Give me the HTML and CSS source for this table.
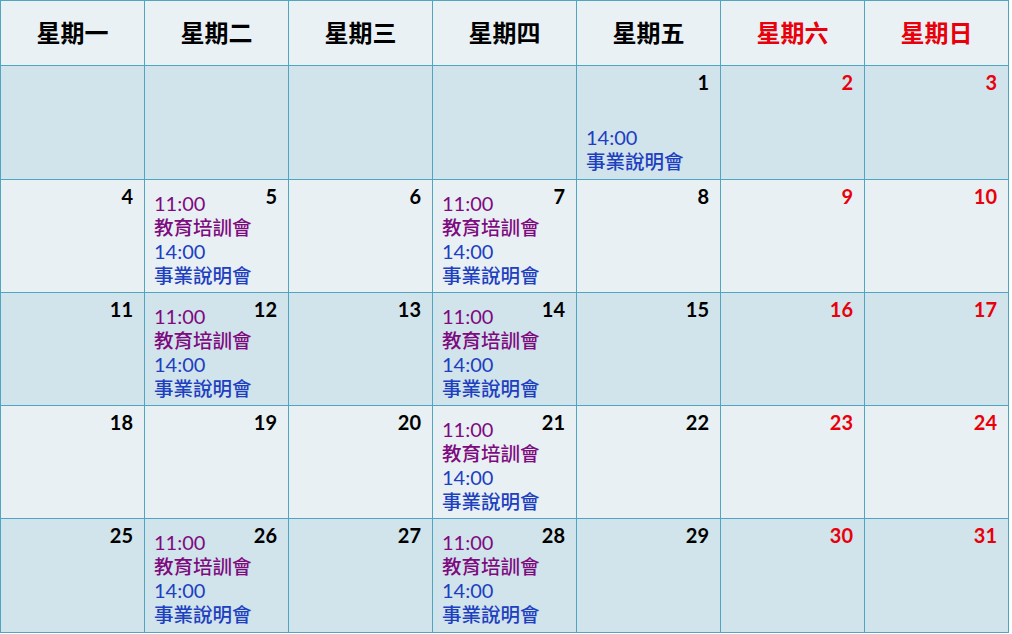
FILE: index.html
```html
<!DOCTYPE html>
<html lang="zh-Hant">
  <head>
    <meta charset="UTF-8" />
    <meta name="viewport" content="width=device-width, initial-scale=1.0" />
    <title>行事曆</title>
    <link rel="stylesheet" href="styles.css">
  </head>
  <body>
    <div class="calendar">
      <div class="head">星期一</div>
      <div class="head">星期二</div>
      <div class="head">星期三</div>
      <div class="head">星期四</div>
      <div class="head">星期五</div>
      <div class="head holiday">星期六</div>
      <div class="head holiday">星期日</div>

      <!-- week 1 -->
      <div class="day dark"></div>
      <div class="day dark"></div>
      <div class="day dark"></div>
      <div class="day dark"></div>
      <div class="day dark">
        <div class="events skip">
          <div class="ev blue">14:00</div>
          <div class="ev blue name">事業說明會</div>
        </div>
        <span class="num">1</span>
      </div>
      <div class="day dark"><span class="num holiday">2</span></div>
      <div class="day dark"><span class="num holiday">3</span></div>

      <!-- week 2 -->
      <div class="day light"><span class="num">4</span></div>
      <div class="day light">
        <div class="events">
          <div class="ev purple">11:00</div>
          <div class="ev purple name">教育培訓會</div>
          <div class="ev blue">14:00</div>
          <div class="ev blue name">事業說明會</div>
        </div>
        <span class="num">5</span>
      </div>
      <div class="day light"><span class="num">6</span></div>
      <div class="day light">
        <div class="events">
          <div class="ev purple">11:00</div>
          <div class="ev purple name">教育培訓會</div>
          <div class="ev blue">14:00</div>
          <div class="ev blue name">事業說明會</div>
        </div>
        <span class="num">7</span>
      </div>
      <div class="day light"><span class="num">8</span></div>
      <div class="day light"><span class="num holiday">9</span></div>
      <div class="day light"><span class="num holiday">10</span></div>

      <!-- week 3 -->
      <div class="day dark"><span class="num">11</span></div>
      <div class="day dark">
        <div class="events">
          <div class="ev purple">11:00</div>
          <div class="ev purple name">教育培訓會</div>
          <div class="ev blue">14:00</div>
          <div class="ev blue name">事業說明會</div>
        </div>
        <span class="num">12</span>
      </div>
      <div class="day dark"><span class="num">13</span></div>
      <div class="day dark">
        <div class="events">
          <div class="ev purple">11:00</div>
          <div class="ev purple name">教育培訓會</div>
          <div class="ev blue">14:00</div>
          <div class="ev blue name">事業說明會</div>
        </div>
        <span class="num">14</span>
      </div>
      <div class="day dark"><span class="num">15</span></div>
      <div class="day dark"><span class="num holiday">16</span></div>
      <div class="day dark"><span class="num holiday">17</span></div>

      <!-- week 4 -->
      <div class="day light"><span class="num">18</span></div>
      <div class="day light"><span class="num">19</span></div>
      <div class="day light"><span class="num">20</span></div>
      <div class="day light">
        <div class="events">
          <div class="ev purple">11:00</div>
          <div class="ev purple name">教育培訓會</div>
          <div class="ev blue">14:00</div>
          <div class="ev blue name">事業說明會</div>
        </div>
        <span class="num">21</span>
      </div>
      <div class="day light"><span class="num">22</span></div>
      <div class="day light"><span class="num holiday">23</span></div>
      <div class="day light"><span class="num holiday">24</span></div>

      <!-- week 5 -->
      <div class="day dark"><span class="num">25</span></div>
      <div class="day dark">
        <div class="events">
          <div class="ev purple">11:00</div>
          <div class="ev purple name">教育培訓會</div>
          <div class="ev blue">14:00</div>
          <div class="ev blue name">事業說明會</div>
        </div>
        <span class="num">26</span>
      </div>
      <div class="day dark"><span class="num">27</span></div>
      <div class="day dark">
        <div class="events">
          <div class="ev purple">11:00</div>
          <div class="ev purple name">教育培訓會</div>
          <div class="ev blue">14:00</div>
          <div class="ev blue name">事業說明會</div>
        </div>
        <span class="num">28</span>
      </div>
      <div class="day dark"><span class="num">29</span></div>
      <div class="day dark"><span class="num holiday">30</span></div>
      <div class="day dark"><span class="num holiday">31</span></div>
    </div>
  </body>
</html>
```

FILE: styles.css
```css
body {
  margin: 0;
  padding: 0;
  background: #ffffff;
  font-family: Lato, "Noto Sans CJK TC", sans-serif;
}
.calendar {
  display: grid;
  grid-template-columns: repeat(7, 143px);
  grid-template-rows: 64px 113px 112px 112px 112px 113px;
  gap: 1px;
  padding: 1px;
  width: max-content;
  background-color: #4fa6c2;
}
.head {
  display: flex;
  align-items: center;
  justify-content: center;
  padding-bottom: 4px;
  background-color: #e9f1f5;
  font-family: "Noto Sans CJK TC", sans-serif;
  font-weight: bold;
  font-size: 24px;
  color: #000;
}
.day {
  display: flex;
  align-items: flex-start;
  padding: 4px 11px 0 9px;
}
.dark {
  background-color: #d1e3eb;
}
.light {
  background-color: #e8f0f4;
}
.num {
  margin-left: auto;
  font-weight: bold;
  font-size: 20px;
  line-height: 24px;
  color: #000;
}
.holiday {
  color: #e8000b;
}
.events {
  padding-top: 7px;
}
.events.skip {
  padding-top: 55px;
}
.ev {
  font-size: 20px;
  line-height: 24px;
  white-space: nowrap;
}
.ev.name {
  font-family: "Noto Sans CJK TC", sans-serif;
  font-weight: 500;
  font-size: 19.5px;
  line-height: 24px;
}
.purple {
  color: #7e0a80;
}
.blue {
  color: #1d3fc0;
}
```
